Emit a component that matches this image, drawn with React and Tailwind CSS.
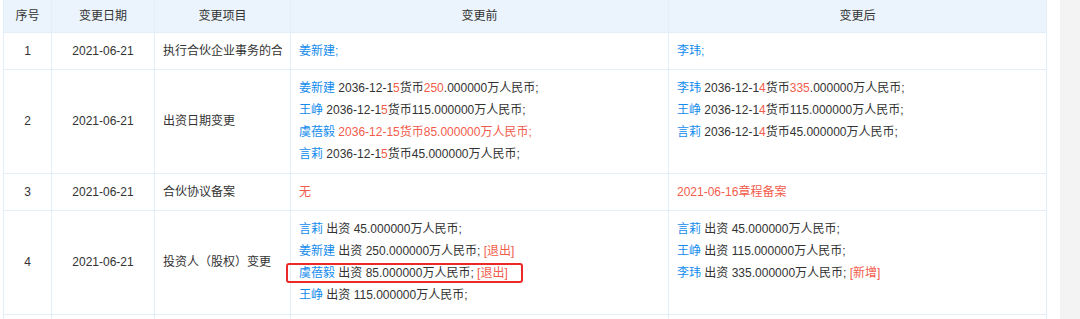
import React from 'react'

const B = 'text-[#128bed]'
const R = 'text-[#f25c4c]'

function Line({ children, className = '' }) {
  return <div className={`leading-[22px] whitespace-nowrap ${className}`}>{children}</div>
}

function Cell({ children, center, middle = true, tall }) {
  return (
    <td
      className={`border border-[#e4eef8] px-2 leading-[22px] whitespace-nowrap ${
        tall ? 'pt-[7px] pb-[8px]' : 'py-[7px]'
      } ${center ? 'text-center' : 'text-left'} ${middle ? 'align-middle' : 'align-top'}`}
    >
      {children}
    </td>
  )
}

export default function App() {
  return (
    <div className="flex w-[1080px] h-[319px] overflow-hidden bg-white font-['Liberation_Sans','Noto_Sans_CJK_SC',sans-serif] text-[12px] text-[#333]">
      <div className="w-[1060px] pl-[3px] bg-white">
        <table className="table-fixed border-collapse w-[1044px]">
          <colgroup>
            <col className="w-[48px]" />
            <col className="w-[103px]" />
            <col className="w-[136px]" />
            <col className="w-[378px]" />
            <col className="w-[378px]" />
          </colgroup>
          <thead>
            <tr className="bg-[#ebf3fc] h-[32px]">
              {['序号', '变更日期', '变更项目', '变更前', '变更后'].map((h) => (
                <th
                  key={h}
                  className="border-x border-b border-[#e4eef8] font-normal text-center align-middle"
                >
                  {h}
                </th>
              ))}
            </tr>
          </thead>
          <tbody>
            <tr>
              <Cell center>1</Cell>
              <Cell center>2021-06-21</Cell>
              <Cell>
                <div className="overflow-hidden">执行合伙企业事务的合伙人</div>
              </Cell>
              <Cell middle={false}>
                <Line><span className={B}>姜新建;</span></Line>
              </Cell>
              <Cell middle={false}>
                <Line><span className={B}>李玮;</span></Line>
              </Cell>
            </tr>
            <tr>
              <Cell center tall>2</Cell>
              <Cell center tall>2021-06-21</Cell>
              <Cell tall>出资日期变更</Cell>
              <Cell middle={false} tall>
                <Line>
                  <span className={B}>姜新建</span> 2036-12-1<span className={R}>5</span>货币<span className={R}>250</span>.000000万人民币;
                </Line>
                <Line>
                  <span className={B}>王峥</span> 2036-12-1<span className={R}>5</span>货币115.000000万人民币;
                </Line>
                <Line>
                  <span className={B}>虞蓓毅</span> <span className={R}>2036-12-15货币85.000000万人民币;</span>
                </Line>
                <Line>
                  <span className={B}>言莉</span> 2036-12-1<span className={R}>5</span>货币45.000000万人民币;
                </Line>
              </Cell>
              <Cell middle={false} tall>
                <Line>
                  <span className={B}>李玮</span> 2036-12-1<span className={R}>4</span>货币<span className={R}>335</span>.000000万人民币;
                </Line>
                <Line>
                  <span className={B}>王峥</span> 2036-12-1<span className={R}>4</span>货币115.000000万人民币;
                </Line>
                <Line>
                  <span className={B}>言莉</span> 2036-12-1<span className={R}>4</span>货币45.000000万人民币;
                </Line>
              </Cell>
            </tr>
            <tr>
              <Cell center>3</Cell>
              <Cell center>2021-06-21</Cell>
              <Cell>合伙协议备案</Cell>
              <Cell middle={false}>
                <Line className={R}>无</Line>
              </Cell>
              <Cell middle={false}>
                <Line className={R}>2021-06-16章程备案</Line>
              </Cell>
            </tr>
            <tr>
              <Cell center tall>4</Cell>
              <Cell center tall>2021-06-21</Cell>
              <Cell tall>投资人（股权）变更</Cell>
              <Cell middle={false} tall>
                <Line>
                  <span className={B}>言莉</span> 出资 45.000000万人民币;
                </Line>
                <Line>
                  <span className={B}>姜新建</span> 出资 250.000000万人民币; <span className={R}>[退出]</span>
                </Line>
                <Line className="relative w-fit">
                  <span className={B}>虞蓓毅</span> 出资 85.000000万人民币; <span className={R}>[退出]</span>
                  <span className="absolute top-[1px] bottom-[1px] left-[-13px] right-[-15px] border-2 border-[#ea2a26] rounded-[3px]" />
                </Line>
                <Line>
                  <span className={B}>王峥</span> 出资 115.000000万人民币;
                </Line>
              </Cell>
              <Cell middle={false} tall>
                <Line>
                  <span className={B}>言莉</span> 出资 45.000000万人民币;
                </Line>
                <Line>
                  <span className={B}>王峥</span> 出资 115.000000万人民币;
                </Line>
                <Line>
                  <span className={B}>李玮</span> 出资 335.000000万人民币; <span className={R}>[新增]</span>
                </Line>
              </Cell>
            </tr>
            <tr className="h-[40px]">
              <Cell center />
              <Cell center />
              <Cell />
              <Cell />
              <Cell />
            </tr>
          </tbody>
        </table>
      </div>
      <div className="w-[20px] bg-[#f3f3f3]" />
    </div>
  )
}
